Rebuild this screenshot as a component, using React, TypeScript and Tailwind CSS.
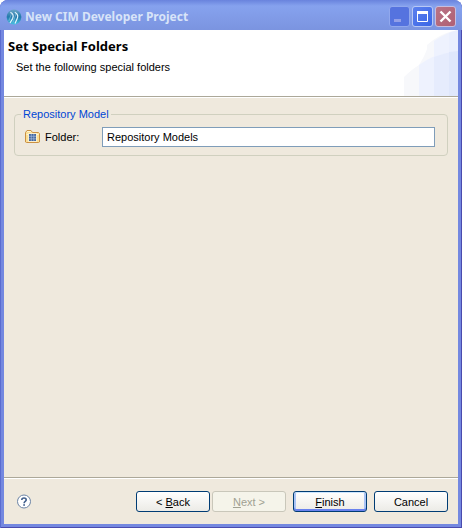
import React from "react";
import clsx from "clsx";

const buttons = [
  { id: "back", key: "B", before: "< ", after: "ack", state: "normal" },
  { id: "next", key: "N", before: "", after: "ext >", state: "disabled" },
  { id: "finish", key: "F", before: "", after: "inish", state: "default" },
  { id: "cancel", key: "", before: "Cancel", after: "", state: "normal" },
];

function AppLogo() {
  return (
    <svg viewBox="0 0 16 16" className="h-4 w-4 shrink-0" aria-hidden="true">
      <defs>
        <linearGradient id="globe" x1="0" y1="0" x2="0" y2="1">
          <stop offset="0" stopColor="#6ba6c8" />
          <stop offset="0.5" stopColor="#2379ac" />
          <stop offset="1" stopColor="#45c0e2" />
        </linearGradient>
      </defs>
      <circle cx="8" cy="8" r="7.4" fill="url(#globe)" />
      <path
        d="M4.4 3.4C7.2 4.4 7.8 7 6.6 9.6L4 14M8.8 3.2C12 4.8 12.4 7.4 11 10L9 14.4"
        fill="none"
        stroke="#e4f5fc"
        strokeWidth="1.2"
      />
      <path d="M5.4 5L2.8 12M10 5L7 13.4" stroke="#a5d6e8" strokeWidth="0.5" />
    </svg>
  );
}

function FolderIcon() {
  return (
    <svg viewBox="0 0 16 16" className="h-4 w-4 shrink-0" aria-hidden="true">
      <path
        d="M0.5 13V3.5L2 1.5H6L7.5 3.5H13.5L14.5 4.5V13L13.5 13.5H1.5Z"
        fill="#fbdf94"
        stroke="#cb9143"
      />
      <path d="M2 2.5H6M1.5 5.5H13.5" stroke="#fff5d0" />
      <path d="M3 4H12V13H3Z" fill="#fbeecb" />
      <path d="M4 5H11V12H4Z" fill="#41669f" />
      <path
        d="M6.3 5V12M8.8 5V12M4 7.3H11M4 9.8H11"
        stroke="#b4c6e2"
        strokeWidth="0.6"
      />
    </svg>
  );
}

function HelpIcon() {
  return (
    <svg viewBox="0 0 16 16" className="h-4 w-4" aria-hidden="true">
      <circle cx="8" cy="7.5" r="6.5" fill="#fff" stroke="#6c84a5" />
      <path
        d="M5.8 6C5.8 3.4 10.2 3.4 10.2 6C10.2 7.4 8.1 7.4 8.1 9.2"
        fill="none"
        stroke="#415f8c"
        strokeWidth="1.6"
      />
      <path d="M7.2 10.2H9V11.8H7.2Z" fill="#415f8c" />
    </svg>
  );
}

function BannerArt() {
  return (
    <svg
      viewBox="0 0 54 66"
      className="absolute right-0 bottom-0 h-[66px] w-[54px]"
      aria-hidden="true"
    >
      <path
        d="M0 66V47C5 42 10 38 15 35C18 30 21 25 23 19V15C32 7 42 2 54 0V66Z"
        fill="#f7f8fb"
      />
      <path d="M30 66V11C37 6 45 2 54 0V66Z" fill="#eef2fe" />
      <path d="M45 66V3L54 0V66Z" fill="#eaeffe" />
      <path d="M15 66V35C26 27 39 22 54 21V66Z" fill="#eef2fe" />
      <path d="M30 66V27C38 24 46 22 54 21V66Z" fill="#e6ecfd" />
      <path d="M45 66V22L54 21V66Z" fill="#dfe7fc" />
    </svg>
  );
}

function TitleBar() {
  const control =
    "flex h-[21px] w-[21px] items-center justify-center rounded-[3px] border";
  return (
    <header className="flex h-[30px] items-center bg-linear-to-b from-[#6983dd] via-[#86a2ee] via-20% to-[#7b94e0] pt-[3px] pr-[6px] pl-[6px]">
      <AppLogo />
      <h1 className="ml-[3px] flex-1 font-['Noto_Sans',sans-serif] text-[12px] font-bold whitespace-nowrap text-[#d8e4f8]">
        New CIM Developer Project
      </h1>
      <div className="flex gap-[2px]">
        <button
          aria-label="Minimize"
          disabled
          className={clsx(control, "border-[#91a8ed] bg-[#5573df]")}
        >
          <svg viewBox="0 0 19 19" className="h-[19px] w-[19px]">
            <path d="M4 12H11V15H4Z" fill="#929fe8" />
          </svg>
        </button>
        <button
          aria-label="Maximize"
          className={clsx(
            control,
            "border-[#b8c8f5] bg-linear-to-br from-[#5c80ee] to-[#3a66e6]",
          )}
        >
          <svg viewBox="0 0 19 19" className="h-[19px] w-[19px]">
            <path d="M4.5 5V14.5H14.5V5" fill="none" stroke="#fff" />
            <path d="M4 4H15V7H4Z" fill="#fff" />
          </svg>
        </button>
        <button
          aria-label="Close"
          className={clsx(
            control,
            "border-[#c7bddd] bg-linear-to-br from-[#b87386] to-[#b06073]",
          )}
        >
          <svg viewBox="0 0 19 19" className="h-[19px] w-[19px]">
            <path
              d="M4.5 4.5L14.5 14.5M14.5 4.5L4.5 14.5"
              stroke="#fff"
              strokeWidth="2.4"
            />
          </svg>
        </button>
      </div>
    </header>
  );
}

export default function App() {
  return (
    <div className="flex min-h-screen flex-col overflow-hidden rounded-t-lg bg-[#7488e0] font-['Liberation_Sans',sans-serif] text-[11px] leading-4 text-black shadow-[inset_1px_0_#5b6cd0,inset_-1px_-1px_#4a4bae]">
      <TitleBar />
      <main className="mx-1 mb-1 flex flex-1 flex-col bg-[#efe9dd]">
        <div className="relative h-[67px] border-b border-[#aca899] bg-white pt-2 pl-1">
          <BannerArt />
          <h2 className="font-['Noto_Sans',sans-serif] text-[13px] leading-4 font-bold">
            Set Special Folders
          </h2>
          <p className="mt-[5px] pl-2">Set the following special folders</p>
        </div>

        <form className="flex flex-1 flex-col border-t border-white">
          <fieldset className="mx-[10px] mt-2 rounded-[4px] border border-[#d0d0bf] px-[10px] pb-2">
            <legend className="-ml-1 px-[2px] text-[#0046d5]">
              Repository Model
            </legend>
            <div className="flex items-center pt-[5px]">
              <FolderIcon />
              <label htmlFor="folder" className="ml-1 w-[57px]">
                Folder:
              </label>
              <input
                id="folder"
                type="text"
                defaultValue="Repository Models"
                className="mr-[2px] h-5 min-w-0 flex-1 border border-[#7f9db9] bg-white px-1 outline-none"
              />
            </div>
          </fieldset>

          <footer className="mt-auto border-t border-[#aca899]">
            <div className="flex items-center border-t border-white px-[10px] py-3">
              <button type="button" aria-label="Help" className="mr-auto ml-[2px]">
                <HelpIcon />
              </button>
              <div className="flex gap-[7px]">
                {buttons.map((b) => (
                  <button
                    key={b.id}
                    type="button"
                    disabled={b.state === "disabled"}
                    className={clsx(
                      "h-[21px] w-[74px] rounded-[3px] border",
                      b.id === "next" && "-ml-[5px]",
                      b.state === "disabled" &&
                        "border-[#c9c7ba] bg-[#f5f4ea] text-[#a1a192]",
                      b.state === "normal" &&
                        "border-[#003c74] bg-linear-to-b from-white to-[#ecebe6]",
                      b.state === "default" &&
                        "border-[#003c74] bg-linear-to-b from-white to-[#ecebe6] shadow-[inset_0_1px_#cee7ff,inset_0_-2px_#6982ee,inset_2px_0_#a9c3f5,inset_-2px_0_#a9c3f5]",
                    )}
                  >
                    {b.before}
                    {b.key && <span className="underline">{b.key}</span>}
                    {b.after}
                  </button>
                ))}
              </div>
            </div>
          </footer>
        </form>
      </main>
    </div>
  );
}
